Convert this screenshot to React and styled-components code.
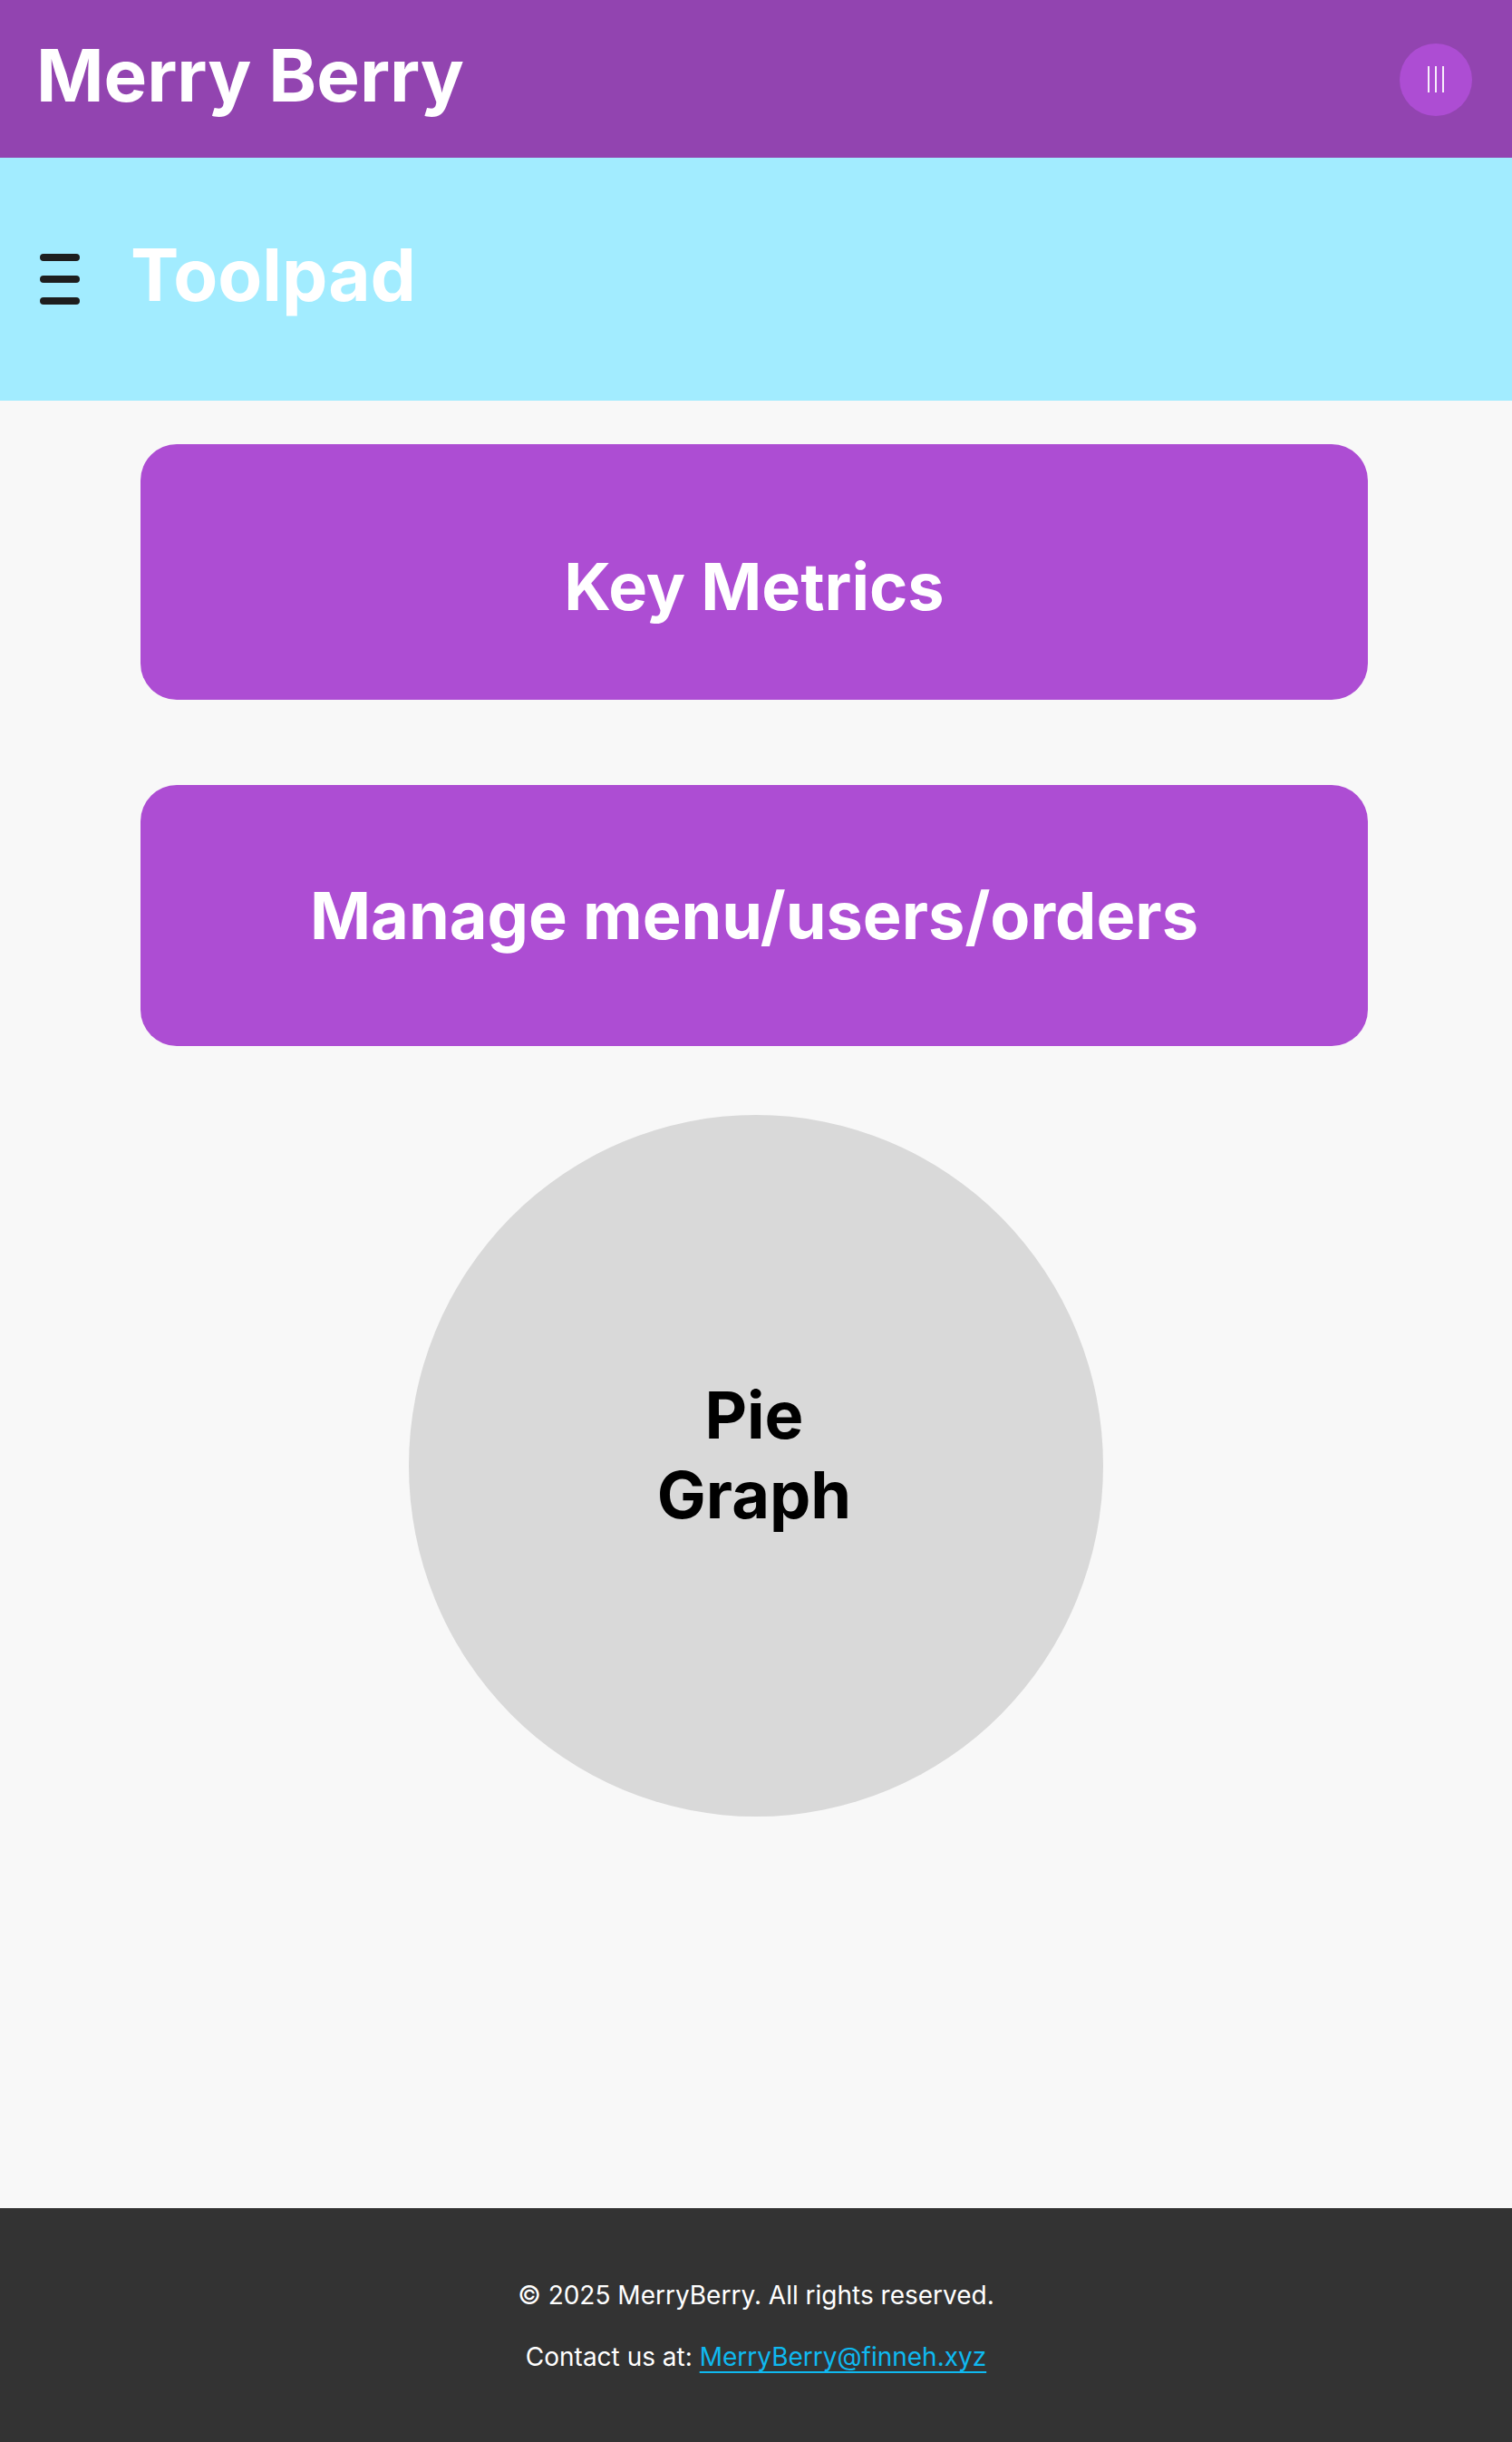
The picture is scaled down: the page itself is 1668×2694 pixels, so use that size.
import React from "react";
import styled, { createGlobalStyle } from "styled-components";

const GlobalStyle = createGlobalStyle`
  *, *::before, *::after { box-sizing: border-box; }
  body {
    margin: 0;
    background: #f8f8f8;
    font-family: Inter, "Liberation Sans", sans-serif;
  }
`;

const Page = styled.div`
  display: flex;
  flex-direction: column;
  min-height: 100vh;
`;

const Header = styled.header`
  display: flex;
  align-items: center;
  justify-content: space-between;
  height: 174px;
  padding: 2px 44px 0 40px;
  background: #9244b0;
`;

const Title = styled.h1`
  margin: 0;
  padding-bottom: 10px;
  font-size: 80px;
  line-height: 96px;
  font-weight: 700;
  color: #fff;
`;

const RoundButton = styled.button`
  display: grid;
  place-items: center;
  width: 80px;
  height: 80px;
  padding: 0;
  border: 0;
  border-radius: 50%;
  background: #ad4dd3;
  cursor: pointer;
`;

const Toolbar = styled.div`
  display: flex;
  align-items: center;
  gap: 56px;
  height: 268px;
  padding: 0 44px;
  background: #a2ecff;
`;

const MenuButton = styled.button`
  display: block;
  padding: 0;
  border: 0;
  background: none;
  cursor: pointer;
  svg { display: block; }
`;

const Main = styled.main`
  display: flex;
  flex-direction: column;
  align-items: center;
  gap: 76px;
  flex: 1;
  padding: 48px 0;
`;

const CardList = styled.div`
  display: flex;
  flex-direction: column;
  align-items: center;
  gap: 94px;
  width: 100%;
  padding-right: 4px;
`;

const Card = styled.button`
  width: 1354px;
  max-width: 92%;
  height: ${(p) => p.$height}px;
  padding: ${(p) => p.$top || 0}px 0 0;
  border: 0;
  border-radius: 40px;
  background: #ad4dd3;
  color: #fff;
  font: 700 72px/88px Inter, "Liberation Sans", sans-serif;
  cursor: pointer;
`;

const Pie = styled.div`
  display: grid;
  place-items: center;
  width: 766px;
  height: 774px;
  padding: 0 4px 24px 0;
  border-radius: 50%;
  background: #d9d9d9;
  color: #000;
  font-size: 72px;
  line-height: 88px;
  font-weight: 700;
  text-align: center;
`;

const PieLabel = styled.span`
  width: min-content;
`;

const Footer = styled.footer`
  display: flex;
  flex-direction: column;
  align-items: center;
  gap: 32px;
  padding: 78px 0 76px;
  background: #333;
  color: #fff;
  font-size: 28px;
  line-height: 36px;
`;

const FooterLine = styled.p`
  margin: 0;
`;

const MailLink = styled.a`
  color: #0fb9f0;
  text-decoration-thickness: 2px;
  text-underline-offset: 6px;
`;

export default function App() {
  return (
    <Page>
      <GlobalStyle />
      <Header>
        <Title>Merry Berry</Title>
        <RoundButton aria-label="Options">
          <svg width="20" height="30" viewBox="0 0 20 30" stroke="#fff" strokeWidth="1.8">
            <path d="M2 0v29M10 0v29M18 0v29" />
          </svg>
        </RoundButton>
      </Header>
      <Toolbar>
        <MenuButton aria-label="Menu">
          <svg width="44" height="56" viewBox="0 0 44 56" stroke="#1e1e1e" strokeWidth="8" strokeLinecap="round">
            <path d="M4 4h36M4 28h36M4 52h36" />
          </svg>
        </MenuButton>
        <Title as="h2">Toolpad</Title>
      </Toolbar>
      <Main>
        <CardList>
          <Card $height={282} $top={32}>Key Metrics</Card>
          <Card $height={288}>Manage menu/users/orders</Card>
        </CardList>
        <Pie>
          <PieLabel>Pie Graph</PieLabel>
        </Pie>
      </Main>
      <Footer>
        <FooterLine>© 2025 MerryBerry. All rights reserved.</FooterLine>
        <FooterLine>
          Contact us at: <MailLink href="mailto:MerryBerry@finneh.xyz">MerryBerry@finneh.xyz</MailLink>
        </FooterLine>
      </Footer>
    </Page>
  );
}
